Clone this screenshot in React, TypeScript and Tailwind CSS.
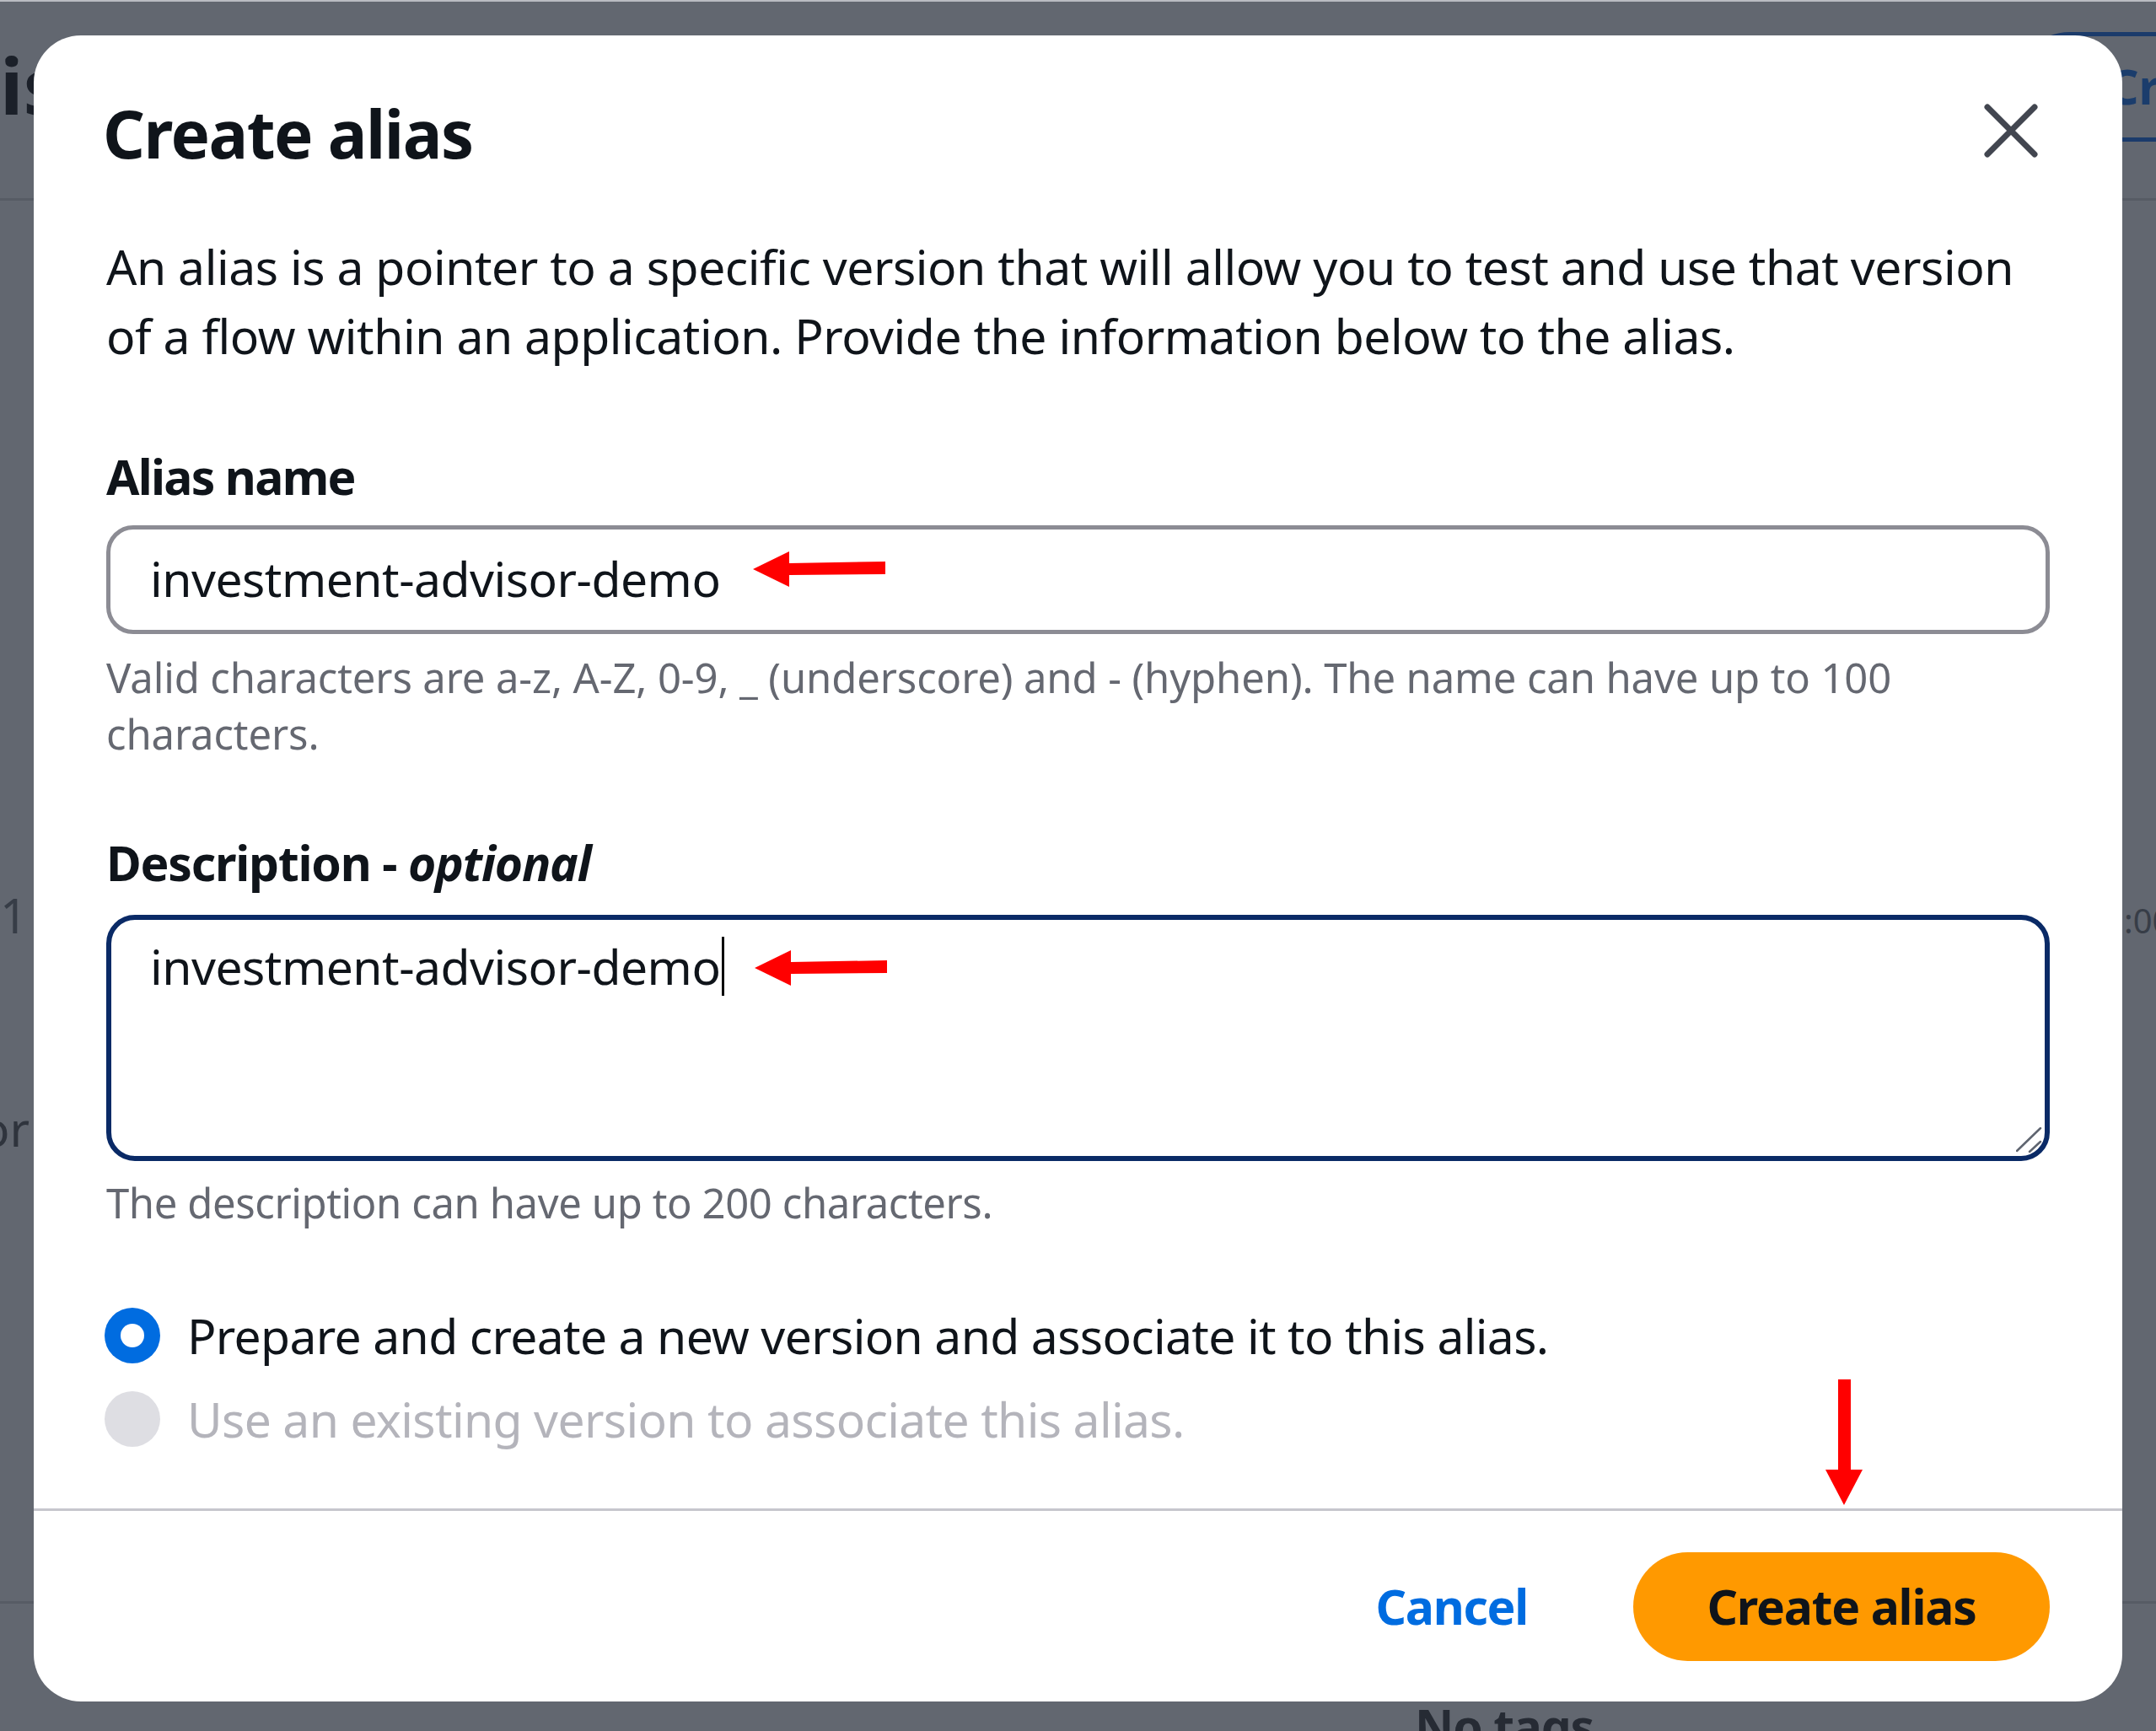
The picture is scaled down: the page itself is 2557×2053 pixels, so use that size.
import React from "react";

function LeftArrow() {
  return (
    <svg width="158" height="43" viewBox="0 0 158 43">
      <polygon points="0,21 43,0 43,14 157,12 157,27 43,28 43,42" fill="#ff0000" />
    </svg>
  );
}

function DownArrow() {
  return (
    <svg width="44" height="149" viewBox="0 0 44 149">
      <polygon points="15,0 30,0 30,107 44,107 22,149 0,107 15,107" fill="#ff0000" />
    </svg>
  );
}

function CloseIcon() {
  return (
    <svg width="66" height="66" viewBox="0 0 66 66">
      <path d="M5 5 L61 61 M61 5 L5 61" stroke="#424650" strokeWidth="7" strokeLinecap="round" fill="none" />
    </svg>
  );
}

function ResizeHandle() {
  return (
    <svg width="32" height="32" viewBox="0 0 32 32">
      <path d="M1 28 L29 1 M16 29 L29 17" stroke="#5f6570" strokeWidth="2.5" strokeLinecap="round" fill="none" />
    </svg>
  );
}

export default function App() {
  return (
    <div className="relative w-[2557px] h-[2053px] overflow-hidden bg-[#626770] font-['Noto_Sans',sans-serif]">
      {/* Background page (dimmed under the overlay) */}
      <div className="flex flex-col">
        <div className="h-[2px] bg-[#b9bcc2]" />
        <div className="grid grid-cols-[2390px_auto] h-[236px] border-b-[3px] border-[#575c65]">
          <div className="mt-[44px] text-[92px] leading-[110px] font-bold text-[#1b2029]">is</div>
          <div className="mt-[36px] h-[130px] border-[5px] border-[#1b3b6b] rounded-full pl-[105px] pr-[90px] flex items-center whitespace-nowrap text-[57px] font-bold text-[#1b3d6c]">
            Create alias
          </div>
        </div>
        <div className="mt-[806px] grid grid-cols-[2519px_1fr] items-baseline text-[#373d47]">
          <div className="text-[57px] leading-[82px]">1</div>
          <div className="text-[40px] leading-[82px] whitespace-nowrap">:00:00</div>
        </div>
        <div className="mt-[164px] -ml-[23px] text-[57px] leading-[82px] text-[#2f343d]">or</div>
        <div className="mt-[520px] h-[3px] bg-[#575c65]" />
        <div className="mt-[104px] pl-[1678px] text-[57px] leading-[82px] font-bold tracking-[-1.2px] text-[#262b34] whitespace-nowrap">No tags</div>
      </div>

      {/* Modal */}
      <div className="absolute left-[40px] top-[42px] w-[2477px] h-[1976px] rounded-[56px] bg-white flex flex-col text-[#0f141a]">
        <div className="flex-1 px-[86px] pt-[68px]">
          <div className="flex justify-between items-start">
            <h2 className="-ml-[4px] text-[78px] leading-[96px] font-bold tracking-[-1.5px]">Create alias</h2>
            <button className="mt-[12px] mr-[13px] w-[66px] h-[66px]">
              <CloseIcon />
            </button>
          </div>

          <p className="mt-[69px] text-[57px] leading-[82px] tracking-[-0.45px] whitespace-nowrap">
            An alias is a pointer to a specific version that will allow you to test and use that version
            <br />
            of a flow within an application. Provide the information below to the alias.
          </p>

          <div className="mt-[85px] text-[57px] leading-[82px] font-bold tracking-[-1.7px]">Alias name</div>
          <div className="relative mt-[17px] h-[129px] border-[5px] border-[#8c8c94] rounded-[32px] flex items-center pl-[47px] pb-[4px]">
            <span className="text-[57px] leading-[82px] tracking-[-0.5px]">investment-advisor-demo</span>
            <div className="absolute left-[762px] top-[26px]">
              <LeftArrow />
            </div>
          </div>
          <p className="mt-[18px] text-[49px] leading-[67px] tracking-[-0.12px] text-[#656871] whitespace-nowrap">
            Valid characters are a-z, A-Z, 0-9, _ (underscore) and - (hyphen). The name can have up to 100
            <br />
            characters.
          </p>

          <div className="mt-[78px] text-[57px] leading-[82px] font-bold tracking-[-1.2px]">
            Description - <i>optional</i>
          </div>
          <div className="relative mt-[21px] h-[292px] border-[6px] border-[#0a2a66] rounded-[34px] pt-[14px] pl-[46px]">
            <div className="flex items-center h-[82px]">
              <span className="text-[57px] leading-[82px] tracking-[-0.5px]">investment-advisor-demo</span>
              <div className="ml-[2px] w-[3px] h-[70px] bg-black" />
            </div>
            <div className="absolute left-[763px] top-[36px]">
              <LeftArrow />
            </div>
            <div className="absolute right-[2px] bottom-[2px] flex">
              <ResizeHandle />
            </div>
          </div>
          <p className="mt-[16px] text-[49px] leading-[67px] tracking-[-0.4px] text-[#656871]">
            The description can have up to 200 characters.
          </p>

          <div className="mt-[83px] flex flex-col gap-[17px]">
            <div className="flex items-center h-[82px]">
              <div className="-ml-[2px] w-[66px] h-[66px] shrink-0 rounded-full bg-[#006ce0] flex items-center justify-center">
                <div className="w-[28px] h-[28px] rounded-full bg-white" />
              </div>
              <span className="ml-[32px] text-[57px] leading-[82px] tracking-[-0.65px] whitespace-nowrap">
                Prepare and create a new version and associate it to this alias.
              </span>
            </div>
            <div className="flex items-center h-[82px]">
              <div className="-ml-[2px] w-[66px] h-[66px] shrink-0 rounded-full bg-[#dedee3]" />
              <span className="ml-[32px] text-[57px] leading-[82px] tracking-[-0.65px] text-[#b4b4bb] whitespace-nowrap">
                Use an existing version to associate this alias.
              </span>
            </div>
          </div>
        </div>

        <div className="relative h-[229px] shrink-0 border-t-[3px] border-[#c6c6cd] flex items-center justify-end px-[86px]">
          <span className="mr-[125px] text-[57px] leading-[82px] font-bold tracking-[-1.3px] text-[#006ce0]">Cancel</span>
          <button className="w-[494px] h-[129px] rounded-full bg-[#ff9900] flex items-center justify-center text-[57px] leading-[82px] font-bold tracking-[-1.2px] text-[#0f141a]">
            Create alias
          </button>
        </div>

        <div className="absolute left-[2125px] top-[1594px]">
          <DownArrow />
        </div>
      </div>
    </div>
  );
}
